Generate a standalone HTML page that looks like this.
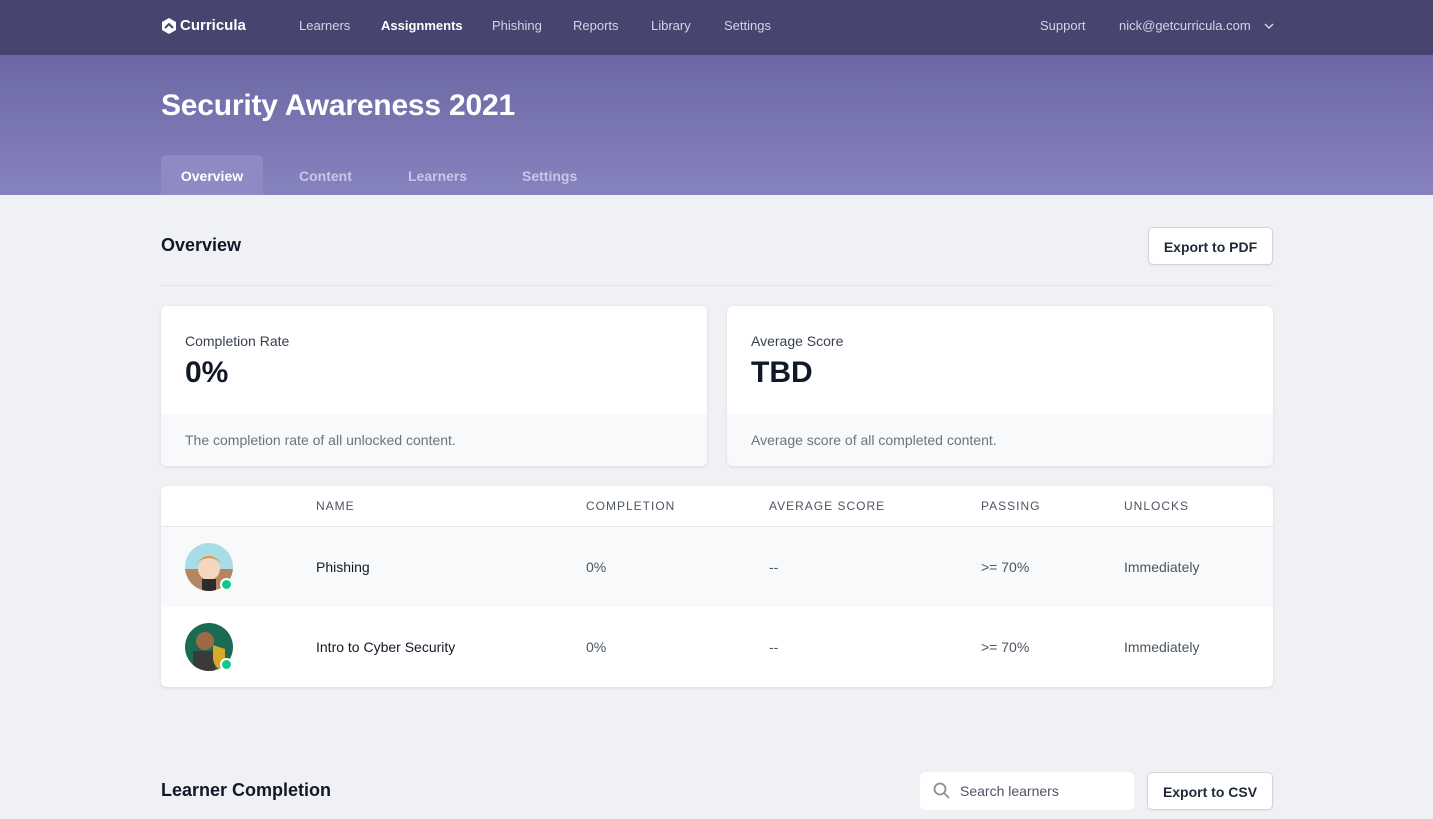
<!DOCTYPE html>
<html><head><meta charset="utf-8"><style>
*{box-sizing:border-box;margin:0;padding:0}
body{width:1433px;height:819px;overflow:hidden;background:#f0f1f5;font-family:"Liberation Sans",sans-serif;color:#111827;position:relative}
.nav{position:absolute;left:0;top:0;width:1433px;height:55px;background:#45456f}
.nav span{position:absolute;top:18px;font-size:13px;color:#d4d4e6}
.hero{position:absolute;left:0;top:55px;width:1433px;height:140px;background:linear-gradient(180deg,#6b68a4,#8683bf)}
h1{position:absolute;left:161px;top:89px;font-size:30px;font-weight:bold;color:#fff;letter-spacing:-0.2px}
.tab{position:absolute;top:155px;height:40px;font-size:14px;font-weight:bold;color:#c9c7e8;padding-top:13px}
.abs{position:absolute}
.btn{position:absolute;background:#fff;border:1px solid #d1d5db;border-radius:5px;font-size:14px;font-weight:bold;color:#1f2937;text-align:center;box-shadow:0 1px 2px rgba(0,0,0,.05)}
.card{position:absolute;background:#fff;border-radius:6px;box-shadow:0 1px 3px rgba(0,0,0,.1);overflow:hidden}
.th{position:absolute;top:499px;font-size:12px;color:#4b5563;letter-spacing:1px}
.td{position:absolute;font-size:14px;color:#4b5563}
.dot{position:absolute;width:13px;height:13px;border-radius:50%;background:#10c98a;border:2px solid #fff}
</style></head><body>
<div class="nav">
<svg class="abs" style="left:161px;top:17px" width="16" height="18" viewBox="0 0 16 18"><path d="M8 1L15 5V13L8 17L1 13V5Z" fill="#fff"/><path d="M4 11L8 7L12 11" stroke="#45456f" stroke-width="2" fill="none"/></svg>
<span style="left:180px;top:17px;font-size:15px;font-weight:bold;color:#fff">Curricula</span>
<span style="left:299px">Learners</span>
<span style="left:381px;color:#fff;font-weight:bold">Assignments</span>
<span style="left:492px">Phishing</span>
<span style="left:573px">Reports</span>
<span style="left:651px">Library</span>
<span style="left:724px">Settings</span>
<span style="left:1040px">Support</span>
<span style="left:1119px">nick@getcurricula.com</span>
<svg class="abs" style="left:1264px;top:22px" width="10" height="8"><path d="M1 2L5 6L9 2" stroke="#d4d4e6" stroke-width="1.5" fill="none"/></svg>
</div>
<div class="hero"></div>
<h1>Security Awareness 2021</h1>
<div class="tab" style="left:161px;width:102px;background:#8e8bc4;border-radius:5px 5px 0 0;color:#fff;text-align:center">Overview</div>
<div class="tab" style="left:299px">Content</div>
<div class="tab" style="left:408px">Learners</div>
<div class="tab" style="left:522px">Settings</div>

<div class="abs" style="left:161px;top:235px;font-size:18px;font-weight:bold">Overview</div>
<div class="btn" style="left:1148px;top:227px;width:125px;height:38px;padding-top:11px">Export to PDF</div>
<div class="abs" style="left:161px;top:285px;width:1112px;height:1px;background:#e0e2e8"></div>

<div class="card" style="left:161px;top:306px;width:546px;height:160px">
<div class="abs" style="left:24px;top:27px;font-size:14px;color:#374151">Completion Rate</div>
<div class="abs" style="left:24px;top:50px;font-size:30px;font-weight:bold">0%</div>
<div class="abs" style="left:0;top:108px;width:546px;height:52px;background:#f8f9fb"></div>
<div class="abs" style="left:24px;top:126px;font-size:14px;color:#6b7280">The completion rate of all unlocked content.</div>
</div>
<div class="card" style="left:727px;top:306px;width:546px;height:160px">
<div class="abs" style="left:24px;top:27px;font-size:14px;color:#374151">Average Score</div>
<div class="abs" style="left:24px;top:50px;font-size:30px;font-weight:bold">TBD</div>
<div class="abs" style="left:0;top:108px;width:546px;height:52px;background:#f8f9fb"></div>
<div class="abs" style="left:24px;top:126px;font-size:14px;color:#6b7280">Average score of all completed content.</div>
</div>

<div class="card" style="left:161px;top:486px;width:1112px;height:201px">
<div class="abs" style="left:0;top:40px;width:1112px;height:1px;background:#e5e7eb"></div>
<div class="abs" style="left:0;top:41px;width:1112px;height:80px;background:#f8f9fb"></div>
</div>
<div class="th" style="left:316px">NAME</div>
<div class="th" style="left:586px">COMPLETION</div>
<div class="th" style="left:769px">AVERAGE SCORE</div>
<div class="th" style="left:981px">PASSING</div>
<div class="th" style="left:1124px">UNLOCKS</div>

<svg class="abs" style="left:185px;top:543px" width="48" height="48" viewBox="0 0 48 48"><defs><clipPath id="c1"><circle cx="24" cy="24" r="24"/></clipPath></defs><g clip-path="url(#c1)"><rect width="48" height="48" fill="#a8dde8"/><rect y="26" width="48" height="22" fill="#b58463"/><circle cx="24" cy="26" r="11" fill="#f4d7bd"/><path d="M10 22Q24 4 38 22L34 18Q24 12 14 18Z" fill="#ee8a33"/><rect x="17" y="36" width="14" height="12" fill="#2b2b2b"/></g></svg>
<div class="dot" style="left:220px;top:578px"></div>
<svg class="abs" style="left:185px;top:623px" width="48" height="48" viewBox="0 0 48 48"><defs><clipPath id="c2"><circle cx="24" cy="24" r="24"/></clipPath></defs><g clip-path="url(#c2)"><rect width="48" height="48" fill="#1b6b52"/><circle cx="20" cy="18" r="9" fill="#9c6a47"/><rect x="8" y="28" width="22" height="20" fill="#3a3a3a"/><path d="M28 22L40 26V34Q40 42 34 46Q28 42 28 34Z" fill="#d9a82b"/></g></svg>
<div class="dot" style="left:220px;top:658px"></div>

<div class="td" style="left:316px;top:559px;color:#111827">Phishing</div>
<div class="td" style="left:586px;top:559px">0%</div>
<div class="td" style="left:769px;top:559px">--</div>
<div class="td" style="left:981px;top:559px">&gt;= 70%</div>
<div class="td" style="left:1124px;top:559px">Immediately</div>
<div class="td" style="left:316px;top:639px;color:#111827">Intro to Cyber Security</div>
<div class="td" style="left:586px;top:639px">0%</div>
<div class="td" style="left:769px;top:639px">--</div>
<div class="td" style="left:981px;top:639px">&gt;= 70%</div>
<div class="td" style="left:1124px;top:639px">Immediately</div>

<div class="abs" style="left:161px;top:780px;font-size:18px;font-weight:bold">Learner Completion</div>
<div class="abs" style="left:920px;top:772px;width:214px;height:38px;background:#fff;border-radius:5px"></div>
<svg class="abs" style="left:933px;top:782px" width="18" height="18"><circle cx="7" cy="7" r="5.5" stroke="#8a8f98" stroke-width="1.8" fill="none"/><path d="M11 11L16 16" stroke="#8a8f98" stroke-width="1.8"/></svg>
<div class="abs" style="left:960px;top:783px;font-size:14px;color:#4b5563">Search learners</div>
<div class="btn" style="left:1147px;top:772px;width:126px;height:38px;padding-top:11px">Export to CSV</div>
</body></html>
